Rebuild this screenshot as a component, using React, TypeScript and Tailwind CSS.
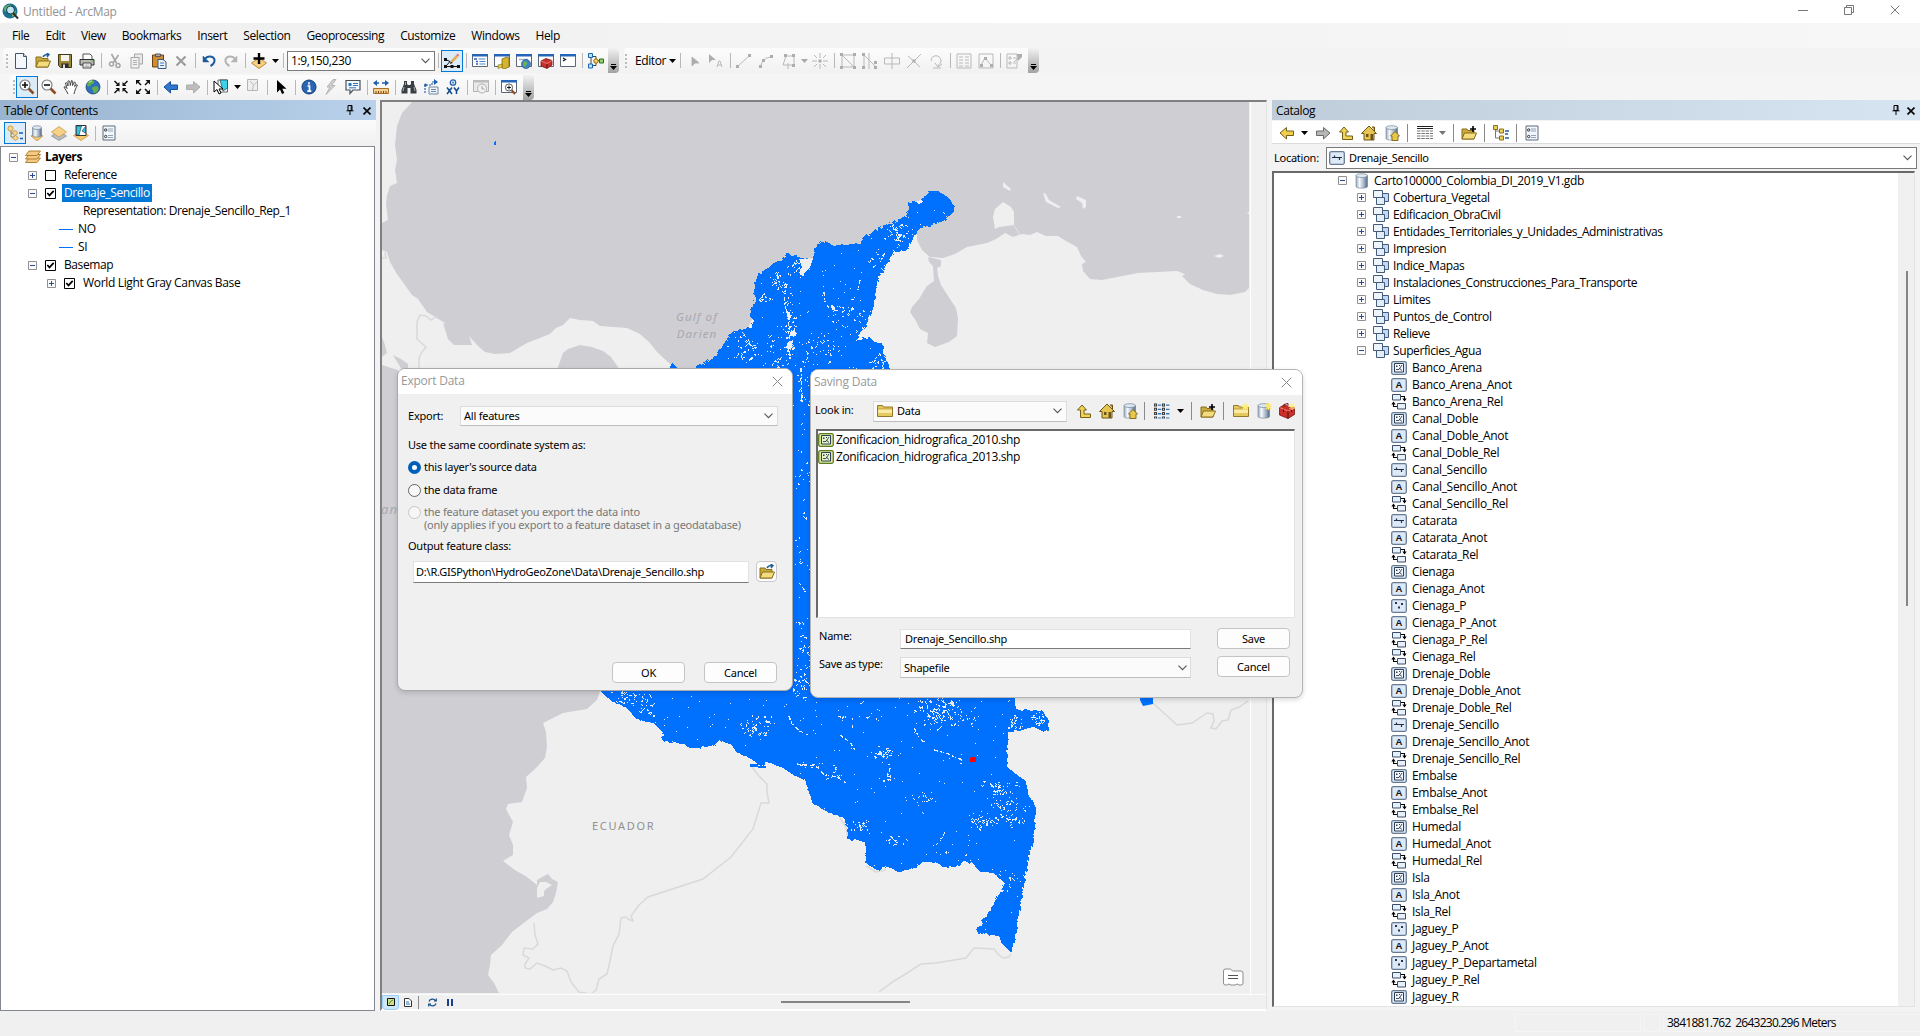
import React from "react";

type P = { children?: React.ReactNode; w?: number; h?: number };
const I = ({ children, w = 16, h = 16 }: P) => (
  <svg width={w} height={h} viewBox="0 0 16 16" fill="none" className="shrink-0">
    {children}
  </svg>
);

/* ---------- icons ---------- */
const Folder = ({ deco }: { deco?: "arrow" | "plus" | "star" }) => (
  <I>
    <path d="M1 4h5l1 1.500h6V14H1z" fill="#c9a93c" stroke="#8a6d1c" />
    <path d="M3.500 8H15.500L13 14H1z" fill="#f3dc7e" stroke="#8a6d1c" />
    {deco === "arrow" && <path d="M8 4c1-2 3-2.500 5-2.500M11.500 0L14 1.500 12 4" stroke="#1f5f9c" strokeWidth="1.400" />}
    {deco === "plus" && <path d="M12 1v6M9 4h6" stroke="#000" strokeWidth="1.600" />}
    {deco === "star" && <path d="M12.500 0v7M9 3.500h7M10 1l5 5M15 1l-5 5" stroke="#fff07a" strokeWidth="1.300" />}
  </I>
);
const FolderPlain = ({ star }: { star?: boolean }) => (
  <I>
    <path d="M.5 2.500h5l1 1.500h9v9.500H.5z" fill="#e6c95e" stroke="#96762a" />
    <path d="M1 6h14" stroke="#b99636" />
    <path d="M1 6.500h14v3.500H1z" fill="#f9eaa4" />
    {star && <path d="M12.500 0v7M9 3.500h7M10 1l5 5M15 1l-5 5" stroke="#fff07a" strokeWidth="1.300" />}
  </I>
);
const NewDoc = () => (
  <I>
    <path d="M2.500.500h8l3 3v12h-11z" fill="#f4f8fd" stroke="#44546a" />
    <path d="M10.500.500v3h3" fill="#cfdcec" stroke="#44546a" />
  </I>
);
const Save = () => (
  <I>
    <path d="M1.500 1.500h13v13h-11l-2-2z" fill="#9c8836" stroke="#3c3717" />
    <path d="M4 2h8v6H4z" fill="#f3f3ee" />
    <path d="M4.500 10.500h7V15h-7z" fill="#2c2c2c" />
    <path d="M6 11.500h2V15H6z" fill="#ddd" />
  </I>
);
const Print = () => (
  <I>
    <path d="M4 1h7l2 2v4H4z" fill="#fff" stroke="#555" />
    <path d="M1 6.500h14V12H1z" fill="#b9b9b3" stroke="#333" />
    <path d="M4 10h8v5H4z" fill="#fff" stroke="#444" />
    <path d="M5.500 12h5M5.500 13.500h5" stroke="#888" strokeWidth=".7" />
    <path d="M12 8h2" stroke="#4c4" />
  </I>
);
const Cut = () => (
  <I>
    <path d="M4.500 1l5 9M11.500 2L6 10" stroke="#a6a6a6" strokeWidth="1.600" />
    <circle cx="4.500" cy="11" r="2" stroke="#a6a6a6" strokeWidth="1.500" />
    <circle cx="11" cy="12.500" r="2" stroke="#a6a6a6" strokeWidth="1.500" />
  </I>
);
const Copy = () => (
  <I>
    <path d="M5.500 1h8v10h-8z" fill="#e9e9e9" stroke="#a6a6a6" />
    <path d="M2 4.500h8V15H2z" fill="#f0f0f0" stroke="#a6a6a6" />
    <path d="M4 7.500h4M4 9.500h4M4 11.500h4" stroke="#b0b0b0" />
  </I>
);
const Paste = () => (
  <I>
    <path d="M1.500 2h11v12h-11z" fill="#d18c33" stroke="#6b4310" />
    <path d="M4.500 1h5v2.500h-5z" fill="#aaa" stroke="#555" />
    <path d="M7 6.500h5l3 2.500v6.500H7z" fill="#eaf2fc" stroke="#3b5878" />
    <path d="M9 10h4M9 12.500h4" stroke="#4a76ab" />
  </I>
);
const Del = () => (
  <I>
    <path d="M3.500 3.500l9 9M12.500 3.500l-9 9" stroke="#9c9c9c" strokeWidth="2.200" />
  </I>
);
const Undo = ({ off }: { off?: boolean }) => (
  <I>
    <g transform={off ? "matrix(-1 0 0 1 16 0)" : undefined} stroke={off ? "#b4b4b4" : "#1d5a9e"}>
      <path d="M4 5.500c4-3.500 10-2 9.500 2.500-.3 2.500-2 4-4 5" strokeWidth="2" />
      <path d="M2 3v6h6z" fill={off ? "#b4b4b4" : "#1d5a9e"} strokeWidth=".5" />
    </g>
  </I>
);
const AddData = () => (
  <I>
    <path d="M8 5l7.500 5L8 15.500.5 10z" fill="#f5cf86" stroke="#c08a2e" />
    <path d="M8 0v11M2.500 5.500h11" stroke="#000" strokeWidth="2.400" />
  </I>
);
const Caret = ({ c = "#000" }: { c?: string }) => (
  <svg width="7" height="4" viewBox="0 0 7 4" className="shrink-0">
    <path d="M0 0h7L3.500 4z" fill={c} />
  </svg>
);
const Chevron = ({ c = "#555" }: { c?: string }) => (
  <svg width="9" height="6" viewBox="0 0 9 6" fill="none" className="shrink-0">
    <path d="M.5.700l4 4 4-4" stroke={c} strokeWidth="1.100" />
  </svg>
);
const EditToggle = () => (
  <I>
    <path d="M1.500 6.500L6 8.500 2 13M2 13.500h12" stroke="#111" strokeWidth="1" />
    <path d="M0 12h3v3H0zM6.500 12h3v3h-3zM13 12h3v3h-3zM0 5h3v3H0z" fill="#111" />
    <path d="M7.500 9L13 3" stroke="#e8ab55" strokeWidth="2.600" />
    <path d="M13 3L14.500 1.300" stroke="#d98080" strokeWidth="2.600" />
    <path d="M6 11l.8-2.500 1.800 1.500z" fill="#111" />
  </I>
);
const Win = ({ children }: { children?: React.ReactNode }) => (
  <I>
    <path d="M.5 1.500h15v12H.5z" fill="#fff" stroke="#5c6675" />
    <path d="M0 1h16v2.500H0z" fill="#2465b8" />
    {children}
  </I>
);
const WinToc = () => (
  <Win>
    <path d="M2 6h3M4 8.500h2M4 11h2" stroke="#1f66c4" strokeWidth="1.300" />
    <path d="M6.500 6h7M7.500 8.500h6M7.500 11h6" stroke="#4c87cc" />
  </Win>
);
const WinCat = () => (
  <Win>
    <path d="M8 6l5-2 2 1v9l-5 2-2-1z" fill="#d4b52f" stroke="#7e6a10" strokeWidth=".8" />
    <path d="M4 12l4-1v3l-4 1.500z" fill="#e7cd50" stroke="#7e6a10" strokeWidth=".6" />
  </Win>
);
const WinGlobe = () => (
  <Win>
    <path d="M3 6.500h9" stroke="#9db4cc" strokeWidth="1.500" />
    <circle cx="10" cy="11" r="4.500" fill="#3f86c8" stroke="#25557f" strokeWidth=".7" />
    <path d="M8 8.500c2 0 4 1 3 2.500s-2 1-1.500 3.500c-2-1-3-4-1.500-6z" fill="#6cb548" />
  </Win>
);
const Toolbox = ({ star }: { star?: boolean }) => (
  <I>
    <path d="M.5 4.500L5 2l10.500 3v6.500L9 15.500.5 12z" fill="#c9302c" stroke="#7c1512" strokeWidth=".8" />
    <path d="M.5 4.500L9 8l6.500-3" stroke="#f08a80" strokeWidth=".9" />
    <path d="M5 4V1.500l4-1v2" stroke="#7c1512" />
    <path d="M9 8v7.500M4.500 6.500V9M12.500 6.500V9" stroke="#4d0f0c" />
    {star && <path d="M13 0v7M9.500 3.500H16M10.500 1l5 5M15.500 1l-5 5" stroke="#ffef7e" />}
  </I>
);
const WinTool = () => (
  <Win>
    <path d="M3 8l5-2.500L14 7.500V12l-5 3.500L3 13z" fill="#c9302c" stroke="#7c1512" strokeWidth=".8" />
    <path d="M3 8l6 2.500 5-3" stroke="#f08a80" strokeWidth=".8" />
    <path d="M9 11v4" stroke="#5a1210" />
  </Win>
);
const WinPy = () => (
  <Win>
    <path d="M3 5L5.500 6.500 3 8" stroke="#111" strokeWidth="1.200" />
  </Win>
);
const Model = () => (
  <I>
    <path d="M3 3v10M5 3.500h3v4h6M5 12.500h3v-5" stroke="#444" />
    <path d="M.5.500h4v4h-4zM.5 11h4v4h-4z" fill="#bfe0fb" stroke="#1665ae" />
    <circle cx="8" cy="8" r="2.200" fill="#f7d463" stroke="#8c6a0a" />
    <path d="M11.500 6h4v4h-4z" fill="#94d36b" stroke="#2b6f16" />
  </I>
);
const Zoomer = ({ minus }: { minus?: boolean }) => (
  <I>
    <path d="M9.500 9.500l5 5" stroke="#8d4d24" strokeWidth="2.600" />
    <circle cx="6" cy="6" r="5" fill="#f7fbfe" stroke="#777" strokeWidth="1.100" />
    <path d={minus ? "M3 6h6" : "M3 6h6M6 3v6"} stroke="#111" strokeWidth="1.600" />
  </I>
);
const Pan = () => (
  <I>
    <path d="M5 15c-1-3-3-4.500-4-7 1.200-.8 2 .5 3 1.500L2.500 4c1-1 2 0 2.500 3L5 2c1.500-1 2 .5 2.300 4.500L8.500 1.500c1.500 0 1.300 1.500 1 5l2-3.500c1.500.3 1 1.500 0 4.500l2.500-2c1 .8-.5 2-1.500 4.500-.8 2-1 3-1.500 5" fill="#fff" stroke="#444" />
  </I>
);
const Globe = ({ s = 16 }: { s?: number }) => (
  <I w={s} h={s}>
    <circle cx="8" cy="8" r="7" fill="#2f6fbe" stroke="#1b3f77" strokeWidth=".8" />
    <path d="M3 3c2-2 5-2 6-1s-1 3-2 3-1 2-3 2.500S1.500 6 3 3zM8 8c2-1 5-1 5.500 1s-2 5-4 5-1-2-2-3.500S7 8.500 8 8z" fill="#62b04b" />
    <path d="M4 3.500c1-1 2-1.500 3-1.500" stroke="#fff" strokeOpacity=".7" />
  </I>
);
const FixIn = () => (
  <I>
    <path d="M1.500 2l3.500 3.500M14.500 2L11 5.500M1.500 14L5 10.500M14.500 14L11 10.500" stroke="#111" strokeWidth="1.500" />
    <path d="M6.500 3v4h-4zM9.500 3v4h4zM6.500 13V9h-4zM9.500 13V9h4z" fill="#111" />
  </I>
);
const FixOut = () => (
  <I>
    <path d="M3 3l3 3M13 3l-3 3M3 13l3-3M13 13l-3-3" stroke="#111" strokeWidth="1.500" />
    <path d="M1 1h4.500L1 5.500zM15 1h-4.500L15 5.500zM1 15h4.500L1 10.500zM15 15h-4.500L15 10.500z" fill="#111" />
  </I>
);
const Arrow = ({ c, s, flip }: { c: string; s: string; flip?: boolean }) => (
  <I>
    <path
      transform={flip ? "matrix(-1 0 0 1 16 0)" : undefined}
      d="M1 8l6.500-5.500V6h7v4.500h-7V14z"
      fill={c}
      stroke={s}
    />
  </I>
);
const SelFeat = () => (
  <I>
    <path d="M5 1h9.500v12H5z" fill="#fff" stroke="#667" />
    <path d="M7 1h7.500v8L10 12z" fill="#3ed2ea" stroke="#244" strokeWidth=".7" />
    <path d="M1 2v11l3-2.500L6 15l2-1-2-4h4z" fill="#fff" stroke="#000" />
  </I>
);
const ClearSel = () => (
  <I>
    <path d="M2.500.500h10v11h-10z" fill="#eee" stroke="#b4b4b4" />
    <path d="M5 2l3.500 4L12 3M8.500 6l-1 5" stroke="#bdbdbd" />
  </I>
);
const Pointer = () => (
  <I>
    <path d="M4 1v12.500l3-3L9 15l2.300-1-2-4.300h4.200z" fill="#000" />
  </I>
);
const Info = () => (
  <I>
    <circle cx="8" cy="8" r="7" fill="#2a66b4" stroke="#123b76" />
    <path d="M8 3.200v2.200M6.500 7H8.500v5M6.300 12.200h4" stroke="#fff" strokeWidth="1.700" />
  </I>
);
const Bolt = () => (
  <I>
    <path d="M10 .5L4 8h3L3 15.500l9-9H8.500L13 .5z" fill="#d0d0d0" stroke="#a8a8a8" strokeWidth=".8" />
  </I>
);
const Popup = () => (
  <I>
    <path d="M1 1.500h14v9.500H8L5 14.500V11H1z" fill="#f5f9fd" stroke="#46505c" strokeWidth="1.200" />
    <path d="M3.500 4h3v3h-3z" fill="#2f74c0" />
    <path d="M8 4.500h5M8 6.500h5M4 8.800h7" stroke="#2f74c0" />
  </I>
);
const Measure = () => (
  <I>
    <path d="M1 4h14" stroke="#1f5fae" strokeWidth="1.400" strokeDasharray="5 3" />
    <path d="M0 4l4-3v6zM16 4l-4-3v6z" fill="#1f5fae" />
    <path d="M.5 9.500h15v5H.5z" fill="#f3cf8f" stroke="#a8702a" />
    <path d="M3 12v2.500M5.500 12v2.500M8 12v2.500M10.500 12v2.500M13 12v2.500" stroke="#7b4a12" />
  </I>
);
const Binoc = () => (
  <I>
    <path d="M3 2h3v3l1 1h2l1-1V2h3v3l2.500 6v3.500H9.500V9h-3v5.500H.5V11L3 5z" fill="#3a3f45" />
    <path d="M3 8l-1 4M13 8l1 4M4.500 3v3" stroke="#aeb6bf" strokeWidth=".9" />
  </I>
);
const Route = () => (
  <I>
    <path d="M2 14V6h7V3h4" stroke="#2b68a8" strokeWidth="1.200" strokeDasharray="2 1" />
    <path d="M11 0l4 3-4 3z" fill="#1f5fae" />
    <path d="M6 8h9v7H6z" fill="#eef4fa" stroke="#6e88a3" />
    <path d="M8 10.500h5M8 12.500h5" stroke="#6e88a3" />
    <circle cx="2.500" cy="6" r="1.500" fill="#2b68a8" />
  </I>
);
const GoXY = () => (
  <I>
    <circle cx="8" cy="3.500" r="2.700" stroke="#1f5fae" strokeWidth="1.300" />
    <circle cx="8" cy="3.500" r=".9" fill="#1f5fae" />
    <path d="M2 8.500l5 6.500M7 8.500L2 15M9 8.500l2.500 3.500L14 8.500M11.500 12v3" stroke="#114a8c" strokeWidth="1.500" />
  </I>
);
const TimeWin = () => (
  <I>
    <path d="M.5 1.500h15v11H.5z" fill="#e9e9e9" stroke="#b2b2b2" />
    <path d="M0 1h16v2.500H0z" fill="#bcbcbc" />
    <circle cx="9" cy="9.500" r="4.500" fill="#f1f1f1" stroke="#b2b2b2" />
    <path d="M9 7v3h2.500" stroke="#a6a6a6" />
  </I>
);
const Viewer = () => (
  <Win>
    <path d="M10.500 11l3.500 4" stroke="#8d4d24" strokeWidth="2" />
    <circle cx="8" cy="8.500" r="3.600" fill="#fff" stroke="#555" />
    <path d="M6 8.500h4M8 6.500v4" stroke="#111" />
  </Win>
);
/* greyed editor tools share one stroke colour */
const G = ({ d, f }: { d: string; f?: string }) => (
  <I>
    <path d={d} stroke="#b9b9b9" strokeWidth="1" />
    {f && <path d={f} fill="#adadad" />}
  </I>
);
const TocOrder = () => (
  <I>
    <path d="M4 5v7h5M4 8h3" stroke="#9a7b3c" />
    <circle cx="3.500" cy="3.500" r="2.600" fill="#f7d690" stroke="#bf8b35" strokeWidth=".8" />
    <circle cx="8" cy="8" r="2.300" fill="#f7d690" stroke="#bf8b35" strokeWidth=".8" />
    <path d="M8.500 10.500l3 2.500-3 2.500-3-2.500z" fill="#f7d690" stroke="#bf8b35" strokeWidth=".8" />
    <path d="M12 8h4M13 13.500h3" stroke="#1f5fae" strokeWidth="1.500" />
  </I>
);
const Cyl = ({ deco }: { deco?: "home" | "star" | "layer" }) => (
  <I>
    <defs>
      <linearGradient id="cyl">
        <stop offset="0" stopColor="#9aaabd" />
        <stop offset=".3" stopColor="#f4f8fb" />
        <stop offset=".65" stopColor="#a9bacb" />
        <stop offset="1" stopColor="#54687e" />
      </linearGradient>
    </defs>
    {deco === "layer" && <path d="M2 11l6-3 6 3-6 5z" fill="#f3c877" stroke="#c08a2e" strokeWidth=".7" />}
    <path
      d={deco === "layer" ? "M3.500 2.500v8c0 2 9 2 9 0v-8z" : "M2 2.500v11c0 2.200 11.500 2.200 11.500 0v-11z"}
      fill="url(#cyl)"
      stroke="#6b7d91"
      strokeWidth=".6"
    />
    <ellipse cx={deco === "layer" ? 8 : 7.75} cy="2.600" rx={deco === "layer" ? 4.500 : 5.750} ry="1.900" fill="#dfe8f1" stroke="#74879c" strokeWidth=".7" />
    {deco === "home" && <path d="M6.500 11L11 6.500l4.500 4.500H14v4.500H8V11z" fill="#e9c64c" stroke="#7d6414" strokeWidth=".9" />}
    {deco === "star" && <path d="M12.500 0v7M9 3.500h7M10 1l5 5M15 1l-5 5" stroke="#fbe76a" strokeWidth="1.200" />}
  </I>
);
const Visible = () => (
  <I>
    <path d="M8 6l7.500 5L8 15.500.5 11z" fill="#b9bcc0" stroke="#83878c" strokeWidth=".7" />
    <path d="M8 1.500L15.500 7 8 12 .5 7z" fill="#f6d189" stroke="#c58f35" strokeWidth=".7" />
  </I>
);
const SelLayer = () => (
  <I>
    <path d="M8 6l7.500 4.500L8 15.500.5 10.500z" fill="#f6c870" stroke="#c58f35" strokeWidth=".7" />
    <path d="M3 .5h10v10H3z" fill="#fff" stroke="#333" />
    <path d="M3.500 1h5L6 10H3.500zM9 6l3.500-4.500V8z" fill="#2fc6e0" stroke="#234" strokeWidth=".6" />
  </I>
);
const Options = () => (
  <I>
    <path d="M2 1h12v14H2z" fill="#f4f8fc" stroke="#5b6a7d" />
    <path d="M7 4h5M7 6h5M7 10.500h5M7 12.500h5" stroke="#8fa3bb" />
    <circle cx="4.700" cy="5" r="1.200" stroke="#222" strokeWidth=".9" />
    <circle cx="4.700" cy="11.500" r="1.200" stroke="#222" strokeWidth=".9" />
  </I>
);
const LayersIcon = () => (
  <I>
    {[12, 8.5, 5].map((y) => (
      <path key={y} d={`M.5 ${y + 1.5}L4 ${y - 3}h11.500L12 ${y + 1.5}z`} fill="#f3c983" stroke="#a97524" strokeWidth=".9" />
    ))}
  </I>
);
const Up = () => (
  <I>
    <path d="M1.500 7L6 2l4.500 5H8v4h6.500v3.500H4.500V7z" fill="#f0d257" stroke="#75601a" />
  </I>
);
const Home = () => (
  <I>
    <path d="M11 2h2.500v4" fill="#b98c2c" stroke="#6b5212" />
    <path d="M.5 8.500L8 1l7.500 7.500H13V15H3V8.500z" fill="#e6c552" stroke="#6f5816" />
    <path d="M5 9h2.500v3H5zM9.500 9H12v6H9.500z" fill="#6c521b" />
  </I>
);
const TableIc = () => (
  <I>
    <path d="M0 1.500h16M0 3.500h16" stroke="#222" strokeWidth="1" />
    <path d="M0 6h16M0 8.500h16M0 11h16M0 13.500h16" stroke="#777" strokeDasharray="3.500 .8" strokeWidth="1.200" />
  </I>
);
const ListIc = () => (
  <I>
    <path d="M1.500 .5v15M9.500 .5v15" stroke="#3d3d3d" strokeWidth="3" strokeDasharray="3 1.300" />
    <path d="M1.500 1.500v14M9.500 1.500v14" stroke="#eee" strokeWidth="1" strokeDasharray="1 3.300" />
    <path d="M5.500 .5v15M13.700 .5v15" stroke="#2f78c4" strokeWidth="3.500" strokeDasharray="1.300 3" strokeDashoffset="-1" />
  </I>
);
const TreeIc = () => (
  <I>
    <path d="M2.500 3v10h5M2.500 6h5" stroke="#777" />
    <path d="M.5.500h4v4h-4zM6.500 4h4v4h-4zM6.500 11h4v4h-4z" fill="#ecd05c" stroke="#8a7018" />
    <path d="M12 6h4M12 9h3M12 13h4" stroke="#1f5fae" strokeWidth="1.300" />
  </I>
);
const DatasetIc = () => (
  <I>
    <path d="M7.500 3.500h8v8h-8z" fill="#c3d8f3" stroke="#445b7b" />
    <path d="M.5.500h9v7h-9z" fill="#eef4fc" stroke="#445b7b" />
    <path d="M3.500 7.500h8v7h-8z" fill="#e2edfa" stroke="#445b7b" />
  </I>
);
const FrameIc = ({ kind, green }: { kind: string; green?: boolean }) => (
  <svg width="16" height="14" viewBox="0 0 16 14" fill="none" className="shrink-0">
    <rect x=".7" y=".7" width="14.600" height="12.600" rx="1.500" fill={green ? "#d8e8a4" : "#dde9f7"} stroke={green ? "#5f7b1f" : "#667a92"} strokeWidth="1.300" />
    {kind === "poly" && (
      <>
        <path d="M3.500 2.500h9v8.500h-9z" fill={green ? "#e9f3c8" : "#f5f9fd"} stroke="#2d3e55" />
        <path d="M5 8.500h3L11 4M8 7l3 2.500" stroke="#2d3e55" strokeWidth=".9" />
        <path d="M5 4.500h1.500v1.500H5zM8 4h1v1H8z" fill="#2d3e55" />
      </>
    )}
    {kind === "line" && <path d="M3 6.500h10M5.500 4.500v2M10.500 6.500v2.500" stroke="#222f44" strokeWidth="1.200" />}
    {kind === "point" && <path d="M4 3h2v2H4zM10 4h2v2h-2zM7 7.500h2v2H7z" fill="#26354c" />}
    {kind === "anot" && (
      <text x="8" y="10.300" textAnchor="middle" fontFamily="Liberation Sans" fontWeight="bold" fontSize="9.500" letterSpacing="0" fill="#111">
        A
      </text>
    )}
  </svg>
);
const RelIc = () => (
  <I>
    <path d="M1.500.500h8v5.500h-8zM6.500 9.500h8V15h-8z" fill="#e6f0fb" stroke="#3b4c64" />
    <path d="M10 2.500h3.500V6M6 12.500H2.500V9" stroke="#000" strokeWidth="1.100" />
    <path d="M11.300 4.500h4.400l-2.200 3zM.3 10.500h4.400l-2.200-3z" fill="#000" />
  </I>
);
const Pin = () => (
  <svg width="8" height="11" viewBox="0 0 8 11" fill="none">
    <path d="M2 .5h4v5H2zM.5 5.800h7M4 6v4M5.200 1v4.500" stroke="#000" strokeWidth="1" />
  </svg>
);
const X = ({ c = "#000", s = 8, w = 1.6 }: { c?: string; s?: number; w?: number }) => (
  <svg width={s} height={s} viewBox="0 0 10 10" fill="none">
    <path d="M.7.700l8.600 8.600M9.300.700L.7 9.300" stroke={c} strokeWidth={w * (10 / s)} />
  </svg>
);
const Expander = ({ open }: { open?: boolean }) => (
  <svg width="9" height="9" viewBox="0 0 9 9" fill="none" className="shrink-0">
    <path d="M.5.500h8v8h-8z" fill="#fafafa" stroke="#919191" />
    <path d={open ? "M2 4.500h5" : "M2 4.500h5M4.500 2v5"} stroke="#2c4a93" />
  </svg>
);
const Check = ({ on }: { on?: boolean }) => (
  <svg width="11" height="11" viewBox="0 0 11 11" fill="none" className="shrink-0">
    <path d="M.5.500h10v10H.5z" fill="#fff" stroke="#000" />
    {on && <path d="M2.300 5l2.200 2.400 4.200-4.500" stroke="#000" strokeWidth="1.700" />}
  </svg>
);

/* ---------- toolbar parts ---------- */
const C = ({ children, on, w }: { children: React.ReactNode; on?: boolean; w?: "s" | "m" }) => (
  <div
    className={
      (w === "s" ? "w-2.5 " : "w-[22px] ") +
      "flex h-[22px] shrink-0 items-center justify-center" +
      (on ? " border border-[#0078d7] bg-[#dcebf8]" : "")
    }
  >
    {children}
  </div>
);
const S = () => (
  <div className="flex w-1.5 shrink-0 justify-center">
    <div className="h-[15px] w-px bg-[#b8b8b8]" />
  </div>
);
const Grip = () => (
  <div className="flex w-1 shrink-0 flex-col items-center gap-[2px]">
    {[0, 1, 2, 3].map((i) => (
      <div key={i} className="size-[2px] bg-[#bcbcbc]" />
    ))}
  </div>
);
const Cap = () => (
  <div className="flex h-[25px] w-[11px] shrink-0 flex-col items-center justify-end gap-px rounded-r-sm bg-gradient-to-b from-[#f2f2f2] to-[#a2a2a2] pb-[3px]">
    <div className="h-px w-[5px] bg-black" />
    <Caret />
  </div>
);
const PanelSep = () => <div className="h-[18px] w-px shrink-0 bg-[#8a8a8a]" />;

/* ---------- map ---------- */
const COLOMBIA =
  "660,372 669,369 672,363 677,367 680,372 693,369 705,363 711,358 717,355 725,342 732,332 740,329 752,328 753,320 750,315 755,300 754,290 757,275 768,268 774,263 780,260 787,254 797,256 805,259 813,258 815,252 816,245 820,241 826,242 832,245 858,244 868,235 882,227 896,221 907,215 909,209 908,202 920,200 930,192 938,191 948,197 954,206 954,212 943,221 932,225 917,229 912,241 907,250 893,253 885,267 877,282 875,297 872,313 866,325 855,340 870,337 875,343 882,343 885,357 890,369 900,420 1015,500 1015,697 1016,710 1043,711 1048,720 1048,730 1043,731 1033,727 1008,733 1007,767 1015,773 1027,782 1028,793 1036,808 1034,835 1030,853 1025,880 1020,907 1015,937 1011,953 1002,943 998,935 978,934 977,930 993,905 1005,883 993,873 980,872 973,863 963,862 955,867 943,867 935,862 923,862 915,868 900,872 888,867 877,870 865,863 866,843 858,840 848,840 847,827 843,817 830,813 813,804 809,793 806,780 793,775 783,768 768,762 762,767 750,758 737,753 730,743 718,741 713,747 692,748 680,743 663,741 663,732 653,723 637,720 627,708 613,702 600,691 640,560";

function rng(seed: number) {
  let s = seed;
  return () => {
    s = (s * 1664525 + 1013904223) % 4294967296;
    return s / 4294967296;
  };
}
/* gaps in the dense drainage network: [cx, cy, rx, ry, count] */
const CLUSTERS: number[][] = [
  [787, 300, 7, 30, 26], [790, 340, 8, 26, 50], [745, 348, 13, 16, 34], [820, 350, 28, 18, 38], [798, 268, 13, 12, 24],
  [776, 280, 6, 9, 12], [765, 299, 9, 4, 12], [845, 315, 24, 15, 34], [898, 234, 13, 12, 44], [878, 257, 10, 14, 10],
  [877, 360, 9, 14, 22], [777, 362, 8, 8, 12], [760, 350, 30, 18, 20], [803, 390, 9, 26, 20], [803, 450, 9, 60, 16], [803, 560, 9, 50, 14], [803, 660, 8, 40, 30],
  [625, 697, 14, 9, 34], [645, 705, 14, 12, 26], [755, 727, 22, 14, 44], [800, 688, 16, 10, 26],
  [940, 705, 32, 12, 66], [950, 718, 32, 12, 46], [884, 753, 12, 6, 28], [887, 775, 4, 12, 14], [1015, 722, 10, 7, 26], [1038, 718, 12, 8, 24],
  [1000, 788, 20, 9, 38], [1010, 805, 20, 7, 34], [980, 820, 16, 8, 40], [1010, 820, 20, 7, 26], [1002, 880, 20, 12, 22],
  [920, 798, 15, 7, 14], [832, 775, 14, 6, 12], [860, 825, 14, 8, 18], [895, 840, 14, 6, 10], [815, 765, 20, 4, 12], [960, 850, 20, 10, 6], [860, 718, 30, 16, 16],
];
const LINES: string[] = [
  "789,716 791,722 799,731 808,735", "840,735 850,742 855,750", "914,728 918,735 925,744", "934,750 946,753 957,758 963,760",
  "945,832 941,840 936,845", "890,836 898,843", "797,764 815,766 825,775 838,777 846,783", "777,275 780,285 778,290",
  "787,284 784,296 787,312 790,335 788,352", "824,292 825,302 829,308", "885,253 880,262", "860,280 858,290", "801,368 802,400",
];
function Specks() {
  const r = rng(7331);
  let d = "";
  const dot = (x: number, y: number) => {
    d += `M${Math.round(x)} ${Math.round(y)}h1v1h-1z`;
  };
  for (let i = 0; i < 1250; i++) dot(600 + r() * 440, 190 + r() * 770);
  for (const [cx, cy, rx, ry, n] of CLUSTERS)
    for (let i = 0; i < n; i++) {
      const a = r() * 6.283;
      const k = Math.sqrt(r()) * (0.5 + r() * 0.7);
      let x = cx + Math.cos(a) * rx * k;
      let y = cy + Math.sin(a) * ry * k;
      const len = 1 + Math.floor(r() * r() * 7);
      for (let j = 0; j < len; j++) {
        dot(x, y);
        if (r() < 0.6) x += r() < 0.5 ? -1 : 1;
        if (r() < 0.6) y += r() < 0.5 ? -1 : 1;
      }
    }
  return (
    <g clipPath="url(#co)" shapeRendering="crispEdges">
      <path d={d} fill="#e8eef8" />
      {LINES.map((p) => (
        <polyline key={p} points={p} fill="none" stroke="#e8eef8" strokeWidth="1.300" strokeDasharray="4 2 2 1 1 3" />
      ))}
      <path d="M799 259l14-1-3 10-5 4-2 5-4-4 3-6zM787 312h3l1 6-3 2zM791 330l6 3-3 4-4-2zM788 342l5 2-2 6-5-3zM831 305l3 1 2 5-4-1zM951 700l3 2v5l-3-2zM754 726l4 3-3 2zM920 199l3 3-4 2-3-2z" fill="#efefef" />
    </g>
  );
}
const CaribbeanCoast =
  "M412,102 402,113 397,126 395,145 397,160 395,170 397,183 390,186 387,195 386,205 388,220 382,223 382,250 387,252 390,262 397,274 412,295 418,299 427,312 445,323 447,333 455,345 472,345 469,336 478,346 485,352 495,354 510,353 527,343 550,334 556,328 563,325 570,318 580,320 593,321 600,326 627,328 640,334 650,343 657,352 669,363 676,370 693,372 740,345 770,280 820,260 900,240 917,230 917,240 922,250 930,257 943,258 955,254 967,247 987,243 996,239 1005,233 1013,237 1022,234 1030,235 1037,232 1046,236 1058,236 1066,241 1077,247 1081,256 1086,262 1082,264 1083,271 1090,279 1102,280 1138,273 1177,271 1185,274 1182,276 1190,284 1203,290 1217,294 1230,295 1245,292 1249,288V102z";
const PacificCoast =
  "M382,365 398,370 398,600 600,600 600,691 597,700 587,709 563,713 549,720 543,723 546,732 547,747 545,758 536,768 526,777 527,788 522,802 508,804 506,809 513,822 509,835 513,845 513,855 503,861 515,870 527,877 537,885 537,880 542,877 548,874 552,879 558,882 556,893 553,902 547,909 537,913 525,922 512,932 502,945 491,955 490,965 488,975 494,983 499,993 382,993z";

const MapCanvas = () => (
  <svg width="868" height="891" viewBox="382 102 868 891" className="block shrink-0 bg-[#efefef]">
    <defs>
      <clipPath id="co">
        <polygon points={COLOMBIA} />
      </clipPath>
      <filter id="rough" x="-2%" y="-2%" width="104%" height="104%">
        <feTurbulence type="fractalNoise" baseFrequency=".22" numOctaves="2" seed="4" />
        <feDisplacementMap in="SourceGraphic" scale="5" />
      </filter>
    </defs>
    <g fill="#cfced3">
      <path d={CaribbeanCoast} />
      <path d="M928,257l13,3 0,6-4,2 1,8 3,9 9,14 6,9 2,10-1,18-8,6-14,5-8-4 1-10-8-4-4-8-6-9 2-5 7-8 8-13 7-5-1-15-4-4z" />
      <path d={PacificCoast} />
      <path d="M557 370l6-17 5-4 12-4 12 2 11 4 8 6 9 13zM382 337l3 8 2 8-5 4zM393 355l8 4 7 5 0 6h-6zM443 323l6 3 3 6 6 3 7 4-3 4-8 2-6-6z" />
    </g>
    <g fill="#efefef">
      <path d="M993 217l2-8 8-7 8 5 3 5v13l-15 2-4 2z" />
      <path d="M1003 182l8 7-1 2-7-4zM1043 193l3 1 3 6 12 7-3 1-12-6zM1077 196l9 4v7l-3 2-1-6-6-4zM1177 216l4 0 0 2-4 0zM1214 256l6-2 4 2-5 2zM1247 213l3-2v4zM537 888l3-6 6 0 6 3-6 4-2 2 0 5-7 2z" />
    </g>
    <path d="M1014 225l6 10" stroke="#e3e3e5" />
    <g fill="none" stroke="#d9d9d9" strokeWidth="1.500">
      <path d="M419 370v-12l3-6 4-5-9-8V322l3-7 6 1 5 4 6-4M382 258l4 0-1-6" />
      <path d="M752 767l6 8 9 9 0 8 2 11-8 0-8 26-22 28-28 22-55 18-9 8-8 11 2 5-5-2-2-2-5 1-2 16-6 12-3 15-3 13-8 5-3 11-5 4-12-2-8-10-4-11-6-3-8 2-8-4-8-3-7 6-5-1 0-4 4-6-6-3 1-7 9 1 5-5-3-9-1-12" />
      <path d="M1153 703l24 22 15-2 15-10 6 1 1 7-3 7 5 1 6-8 6-1 3-10 8-3 9-6M879 992l15-11 10-6 17-11 15-1 30-5 8-10 20 1 4 5 5 4 6-1 2-3" />
      <path d="M848 838l-2-11-6-9M866 866l10 6 10-2" />
    </g>
    <text x="697" y="321" textAnchor="middle" fontFamily="Noto Sans" fontStyle="italic" fontSize="11.500" letterSpacing="1.100" fill="#a9a8ad">Gulf of</text>
    <text x="697" y="338" textAnchor="middle" fontFamily="Noto Sans" fontStyle="italic" fontSize="11.500" letterSpacing="1.100" fill="#a9a8ad">Darien</text>
    <text x="381" y="514" fontFamily="Noto Sans" fontStyle="italic" fontSize="13" letterSpacing="1" fill="#aaa9ae">an</text>
    <text x="592" y="829.500" fontFamily="Noto Sans" fontSize="11" letterSpacing="1.700" fill="#909090">ECUADOR</text>
    <g filter="url(#rough)">
      <polygon points={COLOMBIA} fill="#0070ff" shapeRendering="crispEdges" />
    </g>
    <Specks />
    <path d="M750 764h8v2h8v2h-8v-1h-8z M1140 690h13v14l-10 2-3-6z M494 142h2v3h-2z M495 141h1v4h-1z" fill="#0070ff" />
    <path d="M970 758l1-1h4l1 1v4h-6z" fill="#f00" />
    <g>
      <path d="M1223.500 971q0-2 2-2h5l2 2h8.500q2 0 2 2v10q0 2-2 2h-2l-2-1-2 1h-4l-2-1-2 1h-1.500q-2 0-2-2z" fill="#fff" stroke="#8d8d8d" />
      <path d="M1228 975.500h10M1228 978.500h10" stroke="#555" />
    </g>
  </svg>
);

/* ---------- tree data ---------- */
const DATASETS = ["Cobertura_Vegetal", "Edificacion_ObraCivil", "Entidades_Territoriales_y_Unidades_Administrativas", "Impresion", "Indice_Mapas", "Instalaciones_Construcciones_Para_Transporte", "Limites", "Puntos_de_Control", "Relieve", "Superficies_Agua"];
const CLASSES: [string, string][] = [
  ["poly", "Banco_Arena"], ["anot", "Banco_Arena_Anot"], ["rel", "Banco_Arena_Rel"],
  ["poly", "Canal_Doble"], ["anot", "Canal_Doble_Anot"], ["rel", "Canal_Doble_Rel"],
  ["line", "Canal_Sencillo"], ["anot", "Canal_Sencillo_Anot"], ["rel", "Canal_Sencillo_Rel"],
  ["line", "Catarata"], ["anot", "Catarata_Anot"], ["rel", "Catarata_Rel"],
  ["poly", "Cienaga"], ["anot", "Cienaga_Anot"], ["point", "Cienaga_P"], ["anot", "Cienaga_P_Anot"], ["rel", "Cienaga_P_Rel"], ["rel", "Cienaga_Rel"],
  ["poly", "Drenaje_Doble"], ["anot", "Drenaje_Doble_Anot"], ["rel", "Drenaje_Doble_Rel"],
  ["line", "Drenaje_Sencillo"], ["anot", "Drenaje_Sencillo_Anot"], ["rel", "Drenaje_Sencillo_Rel"],
  ["poly", "Embalse"], ["anot", "Embalse_Anot"], ["rel", "Embalse_Rel"],
  ["poly", "Humedal"], ["anot", "Humedal_Anot"], ["rel", "Humedal_Rel"],
  ["poly", "Isla"], ["anot", "Isla_Anot"], ["rel", "Isla_Rel"],
  ["point", "Jaguey_P"], ["anot", "Jaguey_P_Anot"], ["point", "Jaguey_P_Departametal"], ["rel", "Jaguey_P_Rel"], ["poly", "Jaguey_R"],
];

const Btn = ({ children }: { children: React.ReactNode }) => (
  <div className="flex h-[21px] w-[73px] items-center justify-center rounded-[4px] border border-[#c4c4c4] bg-[#fdfdfd]">{children}</div>
);
const Radio = ({ on, off }: { on?: boolean; off?: boolean }) => (
  <div
    className={
      "size-[13px] shrink-0 rounded-full " +
      (on ? "border-4 border-[#005fb8] bg-white" : off ? "border border-[#c6c6c6] bg-[#f6f6f6]" : "border border-[#666] bg-[#f8f8f8]")
    }
  />
);

const TocRow = ({ pad, children }: { pad: string; children: React.ReactNode }) => (
  <div className={"flex h-[18px] items-center whitespace-nowrap " + pad}>{children}</div>
);

function ExportDialog() {
  return (
    <div className="absolute left-[397px] top-[368px] flex h-[323px] w-[396px] flex-col overflow-hidden rounded-lg border border-[#a9a9ab] bg-[#f0f0f0] font-['Noto_Sans',sans-serif] text-[11px] tracking-[-0.23px] shadow-[0_2px_5px_rgba(0,0,0,0.15)]">
      <div className="flex h-[25px] items-center justify-between bg-white pb-px pl-[3px] pr-[9px] font-['Open_Sans',sans-serif] text-[12px] text-[#999]">
        <span>Export Data</span>
        <X c="#888" s={11} w={1} />
      </div>
      <div className="mt-[12px] flex items-center pl-[10px]">
        <span className="w-[52px]">Export:</span>
        <div className="flex h-[20px] w-[318px] items-center justify-between border border-[#dcdcdc] border-b-[#bdbdbd] bg-[#fbfbfb] pl-[3px] pr-1">
          <span>All features</span>
          <Chevron />
        </div>
      </div>
      <div className="mt-[11px] pl-[10px] leading-[16px]">Use the same coordinate system as:</div>
      <div className="mt-[6px] flex items-center gap-[3px] pl-[10px] leading-[16px]"><Radio on />this layer's source data</div>
      <div className="mt-[7px] flex items-center gap-[3px] pl-[10px] leading-[16px]"><Radio />the data frame</div>
      <div className="mt-[7px] flex gap-[3px] pl-[10px] leading-[13px] text-[#787878]">
        <div className="pt-px"><Radio off /></div>
        <div>the feature dataset you export the data into<br />(only applies if you export to a feature dataset in a geodatabase)</div>
      </div>
      <div className="mt-[7px] pl-[10px] leading-[16px]">Output feature class:</div>
      <div className="mt-[7px] flex gap-[7px] pl-[15px]">
        <div className="flex h-[22px] w-[336px] items-center border border-[#e2e2e2] border-b-[#7b7b7b] bg-white pl-[2px]">D:\R.GISPython\HydroGeoZone\Data\Drenaje_Sencillo.shp</div>
        <div className="flex size-[21px] items-center justify-center rounded-[4px] border border-[#c8c8c8] bg-[#fdfdfd]"><Folder deco="arrow" /></div>
      </div>
      <div className="mb-[7px] mr-[15px] mt-auto flex justify-end gap-[19px]"><Btn>OK</Btn><Btn>Cancel</Btn></div>
    </div>
  );
}

function SaveDialog() {
  return (
    <div className="absolute left-[810px] top-[369px] flex h-[329px] w-[493px] flex-col overflow-hidden rounded-lg border border-[#b4b4b4] bg-[#f0f0f0] font-['Noto_Sans',sans-serif] text-[11px] tracking-[-0.23px] shadow-[0_2px_5px_rgba(0,0,0,0.15)]">
      <div className="flex h-[25px] items-center justify-between bg-white pb-px pl-[3px] pr-[10px] font-['Open_Sans',sans-serif] text-[12px] text-[#999]">
        <span>Saving Data</span>
        <X c="#888" s={11} w={1} />
      </div>
      <div className="mt-[5px] flex h-[22px] items-center pl-[4px]">
        <span className="w-[58px] pb-[3px]">Look in:</span>
        <div className="mr-[9px] flex h-[21px] w-[194px] items-center gap-1 border border-[#dcdcdc] border-b-[#bdbdbd] bg-[#fbfbfb] pl-[3px] pr-1">
          <FolderPlain /><span className="flex-1">Data</span><Chevron />
        </div>
        <div className="flex items-center gap-[7px]"><Up /><Home /><Cyl deco="home" /></div>
        <div className="ml-[6px] flex items-center gap-[9px]"><PanelSep /><ListIc /></div>
        <div className="ml-[7px] flex items-center gap-[7px]"><Caret /><PanelSep /></div>
        <div className="ml-[8px] flex items-center gap-[7px]"><Folder deco="plus" /><PanelSep /></div>
        <div className="ml-[9px] flex items-center gap-[7px]"><FolderPlain star /><Cyl deco="star" /><Toolbox star /></div>
      </div>
      <div className="ml-[5px] mt-[7px] h-[189px] w-[479px] border-b border-l-2 border-r border-t-2 border-b-[#e3e3e3] border-l-[#696969] border-r-[#e3e3e3] border-t-[#696969] bg-white font-['Open_Sans',sans-serif] text-[12px] tracking-[-0.36px]">
        {["2010", "2013"].map((y) => (
          <div key={y} className="flex h-[17px] items-center gap-[2px]">
            <FrameIc kind="poly" green />
            <span>Zonificacion_hidrografica_{y}.shp</span>
          </div>
        ))}
      </div>
      <div className="mt-[10px] flex pl-[8px]">
        <div className="flex w-[81px] flex-col gap-[12px] leading-[16px]"><span>Name:</span><span>Save as type:</span></div>
        <div className="flex w-[291px] flex-col gap-[8px] pt-[1px]">
          <div className="flex h-[20px] items-center border border-[#e2e2e2] border-b-[#7b7b7b] bg-white pl-[4px]">Drenaje_Sencillo.shp</div>
          <div className="flex h-[21px] items-center justify-between border border-[#dcdcdc] border-b-[#bdbdbd] bg-[#fbfbfb] pl-[3px] pr-[3px]">Shapefile<Chevron /></div>
        </div>
        <div className="ml-[26px] flex flex-col gap-[7px]"><Btn>Save</Btn><Btn>Cancel</Btn></div>
      </div>
    </div>
  );
}

export default function App() {
  return (
    <div className="relative flex h-[1036px] w-[1920px] flex-col overflow-hidden bg-[#f3f3f3] font-['Open_Sans','Noto_Sans',sans-serif] text-[12px] leading-[16px] tracking-[-0.4px] text-black">
      {/* title bar */}
      <div className="flex h-[23px] shrink-0 items-center bg-white pl-[2px]">
        <svg width="17" height="17" viewBox="0 0 17 17" fill="none">
          <circle cx="8" cy="8" r="7.500" fill="#1d6f8f" />
          <path d="M2 5c2-3 5-4 7-3L7 6 3 9zM10 10l4-3-1 5-3 2z" fill="#69b36a" />
          <circle cx="8.500" cy="7" r="4" fill="#bfe4f2" stroke="#123c50" />
          <path d="M11 10l5 5.500" stroke="#3a2c22" strokeWidth="2" />
        </svg>
        <span className="ml-1 tracking-[-0.25px] text-[#929292]">Untitled - ArcMap</span>
        <div className="ml-auto flex items-center gap-[36px] pb-[3px] pr-[20px]">
          <div className="h-px w-[10px] bg-[#777]" />
          <svg width="10" height="10" viewBox="0 0 10 10" fill="none" stroke="#777">
            <path d="M.5 2.500h7v7h-7zM2.500 2V.5h7v7H8" />
          </svg>
          <X c="#777" s={10} w={1} />
        </div>
      </div>
      {/* menu */}
      <div className="flex h-[25px] shrink-0 items-center gap-[16px] bg-gradient-to-r from-[#f0f0f0] to-[#f7f7f7] pl-[12px] pt-px">
        {["File", "Edit", "View", "Bookmarks", "Insert", "Selection", "Geoprocessing", "Customize", "Windows", "Help"].map((m) => (
          <span key={m}>{m}</span>
        ))}
      </div>
      {/* toolbars */}
      <div className="flex h-[25px] shrink-0 items-center bg-[#f3f3f3] pl-[3px]">
        <div className="flex h-[25px] items-center rounded bg-gradient-to-b from-[#fcfcfc] to-[#f1f1f1] pl-[2px]">
          <Grip />
          <div className="w-px" />
          <C><NewDoc /></C><C><Folder deco="arrow" /></C><C><Save /></C><C><Print /></C><S />
          <C><Cut /></C><C><Copy /></C><C><Paste /></C><C><Del /></C><S />
          <C><Undo /></C><C><Undo off /></C><S />
          <C><AddData /></C><C w="s"><Caret /></C><S />
          <div className="ml-px flex h-[20px] w-[148px] items-center justify-between border border-[#7a7a7a] bg-white pl-[3px] pr-1">
            <span>1:9,150,230</span><Chevron />
          </div>
          <S /><C on><EditToggle /></C><S />
          <C><WinToc /></C><C><WinCat /></C><C><WinGlobe /></C><C><WinTool /></C><C><WinPy /></C><S />
          <C><Model /></C>
          <div className="w-px" />
          <Cap />
        </div>
        <div className="ml-[5px] flex h-[25px] items-center rounded bg-gradient-to-b from-[#fcfcfc] to-[#f1f1f1]">
          <Grip />
          <span className="ml-[7px] mr-[3px] w-[31px]">Editor</span>
          <Caret />
          <div className="w-px" />
          <S />
          <C><G d="M6 4v9l3-3h4z" f="M6 4v9l3-3h4z" /></C>
          <C><G d="M9 14l2-6h1l2 6M10 12h4" f="M1 1v9l3-3h4z" /></C><S />
          <C><G d="M2 13L13 3" f="M0 12h3v3H0zM12 1h3v3h-3z" /></C>
          <C><G d="M3 13C4 7 7 5 13 4" f="M1 12h3v3H1zM4 6h3v3H4zM12 2h3v3h-3z" /></C>
          <C><G d="M3 12L6 3h8v9H3M8 10v6" f="M4 1h3v3H4zM12 1h3v3h-3zM12 11h3v3h-3z" /></C>
          <C w="s"><Caret c="#a8a8a8" /></C>
          <C><G d="M8 0v5M8 11v5M0 8h5M11 8h5M2 2l3 3M14 2l-3 3M2 14l3-3M14 14l-3-3" f="M6.500 6.500h3v3h-3z" /></C><S />
          <C><G d="M2 2h12v12H2zM2 2l12 12" f="M0 0h3v3H0zM13 0h3v3h-3zM0 13h3v3H0zM13 13h3v3h-3z" /></C>
          <C><G d="M2 2v12M7 0v16M2 2l12 12" f="M0 0h3v3H0zM0 13h3v3H0zM12 8h3v3h-3zM12 13h3v3h-3z" /></C>
          <C><G d="M.5 5h15v6H.5zM8 0v16" /></C>
          <C><G d="M1 15L15 1M2 3l12 11" f="M6.500 6.500h3v3h-3z" /></C>
          <C><G d="M3 8c0-7 10-7 10 0 0 3-3 3-3 6M7 10l3 4 4-3M5 15h8" /></C><S />
          <C><G d="M1 1h14v14H1zM3 4h4M3 7h4M3 10h4M3 13h4M9 4h4M9 7h4M9 10h4M9 13h4" /></C>
          <C><G d="M1 1h14v14H1zM3 12l4-7 6 7" f="M2 11h3v3H2zM6 4h3v3H6zM12 11h3v3h-3z" /></C><S />
          <C><G d="M1 1h10v14H1zM3 4h2v2H3zM3 9h2v2H3zM7 5h3M7 10h3M8 9l7-7" f="M11 1h5v3l-4 4z" /></C>
          <div className="w-[3px]" />
          <Cap />
        </div>
      </div>
      <div className="flex h-[27px] shrink-0 items-center bg-[#f5f5f5] pl-[9px] pt-px">
        <div className="flex h-[25px] items-center rounded bg-gradient-to-b from-[#fcfcfc] to-[#f1f1f1] pl-[3px]">
          <Grip />
          <C on><Zoomer /></C><C><Zoomer minus /></C><C><Pan /></C><C><Globe /></C><S />
          <C><FixIn /></C><C><FixOut /></C><S />
          <C><Arrow c="#2f78cf" s="#1a4f96" /></C><C><Arrow c="#bdbdbd" s="#adadad" flip /></C><S />
          <C><SelFeat /></C><C w="s"><Caret /></C><C><ClearSel /></C><S />
          <C><Pointer /></C><S />
          <C><Info /></C><C><Bolt /></C><C><Popup /></C><S />
          <C><Measure /></C><S />
          <C><Binoc /></C><C><Route /></C><C><GoXY /></C><S />
          <C><TimeWin /></C><S />
          <C><Viewer /></C>
          <div className="w-[3px]" />
          <Cap />
        </div>
      </div>

      {/* workspace */}
      <div className="flex h-[911px] shrink-0">
        {/* table of contents */}
        <div className="flex w-[376px] flex-col">
          <div className="flex h-[20px] items-center bg-gradient-to-r from-[#99b4d1] to-[#b9d1ea] pl-1 pr-[5px] pt-px">
            <span>Table Of Contents</span>
            <div className="ml-auto flex items-center gap-[9px]"><Pin /><X /></div>
          </div>
          <div className="flex h-[26px] items-center bg-gradient-to-b from-[#fbfbfb] to-[#f0f0f0] pl-1">
            <C on><TocOrder /></C><C><Cyl deco="layer" /></C><C><Visible /></C><C><SelLayer /></C><S /><C><Options /></C>
          </div>
          <div className="h-[865px] w-[375px] border border-[#828790] bg-white pt-px">
            <TocRow pad="pl-[8px]"><Expander open /><span className="w-[7px]" /><LayersIcon /><b className="ml-[4px]">Layers</b></TocRow>
            <TocRow pad="pl-[27px]"><Expander /><span className="w-[8px]" /><Check /><span className="ml-[8px]">Reference</span></TocRow>
            <TocRow pad="pl-[27px]"><Expander open /><span className="w-[8px]" /><Check on /><span className="ml-[6px] h-[18px] w-[90px] bg-[#0078d7] pl-[2px] leading-[18px] text-white">Drenaje_Sencillo</span></TocRow>
            <TocRow pad="pl-[82px]">Representation: Drenaje_Sencillo_Rep_1</TocRow>
            <TocRow pad="pl-[58px]"><span className="mr-[5px] h-px w-[14px] bg-[#0070ff]" />NO</TocRow>
            <TocRow pad="pl-[58px]"><span className="mr-[5px] h-px w-[14px] bg-[#0070ff]" />SI</TocRow>
            <TocRow pad="pl-[27px]"><Expander open /><span className="w-[8px]" /><Check on /><span className="ml-[8px]">Basemap</span></TocRow>
            <TocRow pad="pl-[46px]"><Expander /><span className="w-[8px]" /><Check on /><span className="ml-[8px] tracking-[-0.33px]">World Light Gray Canvas Base</span></TocRow>
          </div>
        </div>
        {/* map window */}
        <div className="ml-[4px] flex h-[911px] w-[887px] flex-col border-b-2 border-l-2 border-r border-t-2 border-b-white border-l-[#808080] border-r-[#e3e3e3] border-t-[#808080] bg-[#f0f0f0]">
          <div className="flex h-[892px]">
            <MapCanvas />
            <div className="h-[892px] w-px bg-white" />
          </div>
          <div className="flex h-[15px] items-center border-t border-[#fdfdfd]">
            <div className="flex h-[15px] w-[17px] items-center justify-center rounded-b-sm border border-[#99cdf5] bg-[#cfe7fa]">
              <svg width="8" height="8" viewBox="0 0 8 8"><path d="M.5.500h7v7h-7z" fill="#cfe08a" stroke="#111" /><path d="M2 6l2-3 2-1" stroke="#5a8a3a" fill="none" /></svg>
            </div>
            <svg className="ml-[5px]" width="8" height="9" viewBox="0 0 8 9" fill="none"><path d="M.5.500h4.500l2.500 2.500v5.500h-7z" fill="#fff" stroke="#333" /><path d="M2 4h3M2 6h4" stroke="#27b" /></svg>
            <div className="ml-[6px] h-[13px] w-px bg-[#8a8a8a]" />
            <svg className="ml-[9px]" width="9" height="9" viewBox="0 0 9 9" fill="none" stroke="#174f86" strokeWidth="1.200"><path d="M1 3.500c1-3 5-3 6.500-1M8 5.500c-1 3-5 3-6.500 1M8.300.500v2.500H6M.7 8.500V6H3" /></svg>
            <div className="ml-[10px] flex gap-[2px]"><div className="h-[7px] w-[2px] bg-[#1b3f8f]" /><div className="h-[7px] w-[2px] bg-[#1b3f8f]" /></div>
            <div className="ml-[328px] h-[2px] w-[129px] bg-[#858585]" />
          </div>
        </div>
        {/* catalog */}
        <div className="ml-[5px] flex w-[648px] flex-col">
          <div className="flex h-[20px] items-center bg-gradient-to-r from-[#bfcddb] to-[#d7e4f2] pl-1 pr-[5px] pt-px">
            <span>Catalog</span>
            <div className="ml-auto flex items-center gap-[7px]"><Pin /><X /></div>
          </div>
          <div className="mt-px flex h-[23px] items-center border-b border-[#dcdcdc] bg-white pl-[7px] pt-px">
            <Arrow c="#f0cf4e" s="#75601a" />
            <div className="ml-[6px] mr-[7px]"><Caret /></div>
            <Arrow c="#b6b6b6" s="#6a6a6a" flip />
            <div className="mx-[7px] flex gap-[7px]"><Up /><Home /><Cyl deco="home" /></div>
            <PanelSep />
            <div className="ml-[9px] mr-[6px]"><TableIc /></div>
            <Caret c="#777" />
            <div className="ml-[7px]"><PanelSep /></div>
            <div className="mx-[7px]"><Folder deco="plus" /></div>
            <PanelSep />
            <div className="ml-[8px] mr-[7px]"><TreeIc /></div>
            <PanelSep />
            <div className="ml-[7px]"><Options /></div>
          </div>
          <div className="flex h-[27px] items-center pt-px font-['Noto_Sans',sans-serif] text-[11px]">
            <span className="w-[54px] pl-[2px] tracking-[-0.25px]">Location:</span>
            <div className="-mt-px flex h-[22px] w-[591px] items-center border border-[#7a7a7a] bg-white pl-[2px] pr-1">
              <FrameIc kind="line" />
              <span className="ml-[4px] flex-1 pt-px tracking-[-0.33px]">Drenaje_Sencillo</span>
              <Chevron />
            </div>
          </div>
          <div className="flex h-[836px] w-[643px] border-b border-l-2 border-r border-t-2 border-b-[#e3e3e3] border-l-[#696969] border-r-[#e3e3e3] border-t-[#696969] bg-white">
            <div className="-mt-px flex-1 whitespace-nowrap">
              <div className="flex h-[17px] items-center pl-[64px]"><Expander open /><span className="w-[7px]" /><Cyl /><span className="ml-[4px]">Carto100000_Colombia_DI_2019_V1.gdb</span></div>
              {DATASETS.map((n) => (
                <div key={n} className="flex h-[17px] items-center pl-[83px]"><Expander open={n === "Superficies_Agua"} /><span className="w-[7px]" /><DatasetIc /><span className="ml-[4px]">{n}</span></div>
              ))}
              {CLASSES.map(([k, n]) => (
                <div key={n} className="flex h-[17px] items-center pl-[117px] tracking-[-0.32px]">{k === "rel" ? <RelIc /> : <FrameIc kind={k} />}<span className="ml-[5px]">{n}</span></div>
              ))}
            </div>
            <div className="w-[16px] bg-[#f0f0f0] pl-[8px] pt-[98px]"><div className="h-[335px] w-[2px] bg-[#858585]" /></div>
          </div>
        </div>
      </div>
      {/* status bar */}
      <div className="flex h-[25px] items-center justify-end gap-[3px] bg-[#f0f0f0] pb-px">
        <div className="h-[18px] w-[126px] border border-[#f5f5f5]" />
        <div className="h-[18px] w-[16px] border border-[#f5f5f5]" />
        <div className="flex h-[18px] w-[257px] items-center border border-r-0 border-[#f5f5f5] pl-[3px]">
          <span className="whitespace-pre tracking-[-0.75px]">{"3841881.762  2643230.296 Meters"}</span>
        </div>
      </div>

      <ExportDialog />
      <SaveDialog />
    </div>
  );
}
